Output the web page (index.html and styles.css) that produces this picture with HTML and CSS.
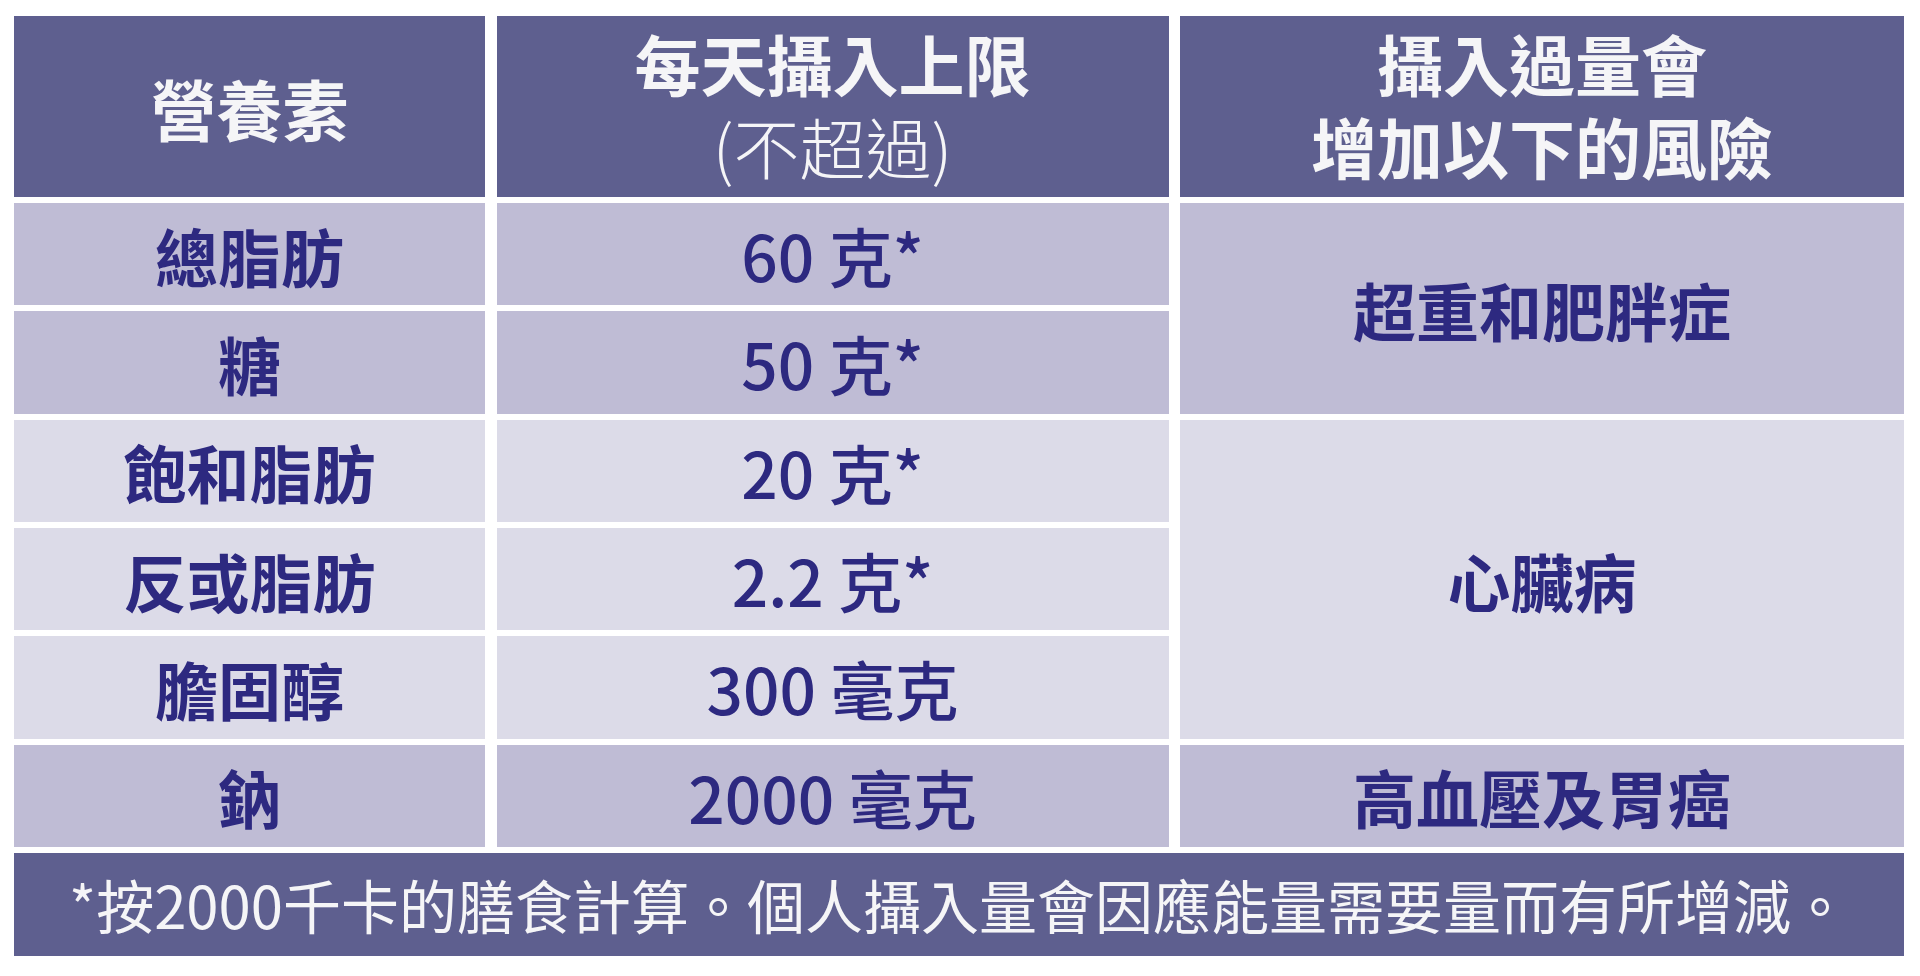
FILE: index.html
```html
<!DOCTYPE html>
<html lang="zh-Hant">
<head>
<meta charset="utf-8">
<title>營養素攝入上限</title>
<link rel="stylesheet" href="styles.css">
</head>
<body>
<main class="page">
  <div class="table">
    <div class="cell head c1 r1">營養素</div>
    <div class="cell head c2 r1"><p class="head-lines">每天攝入上限<br><span class="light">(不超過)</span></p></div>
    <div class="cell head c3 r1"><p class="head-lines">攝入過量會<br>增加以下的風險</p></div>

    <div class="cell dark label c1 r2">總脂肪</div>
    <div class="cell dark value c2 r2">60 克*</div>
    <div class="cell dark label c3 r2 span2">超重和肥胖症</div>

    <div class="cell dark label c1 r3">糖</div>
    <div class="cell dark value c2 r3">50 克*</div>

    <div class="cell pale label c1 r4">飽和脂肪</div>
    <div class="cell pale value c2 r4">20 克*</div>
    <div class="cell pale label c3 r4 span3">心臟病</div>

    <div class="cell pale label c1 r5">反或脂肪</div>
    <div class="cell pale value c2 r5">2.2 克*</div>

    <div class="cell pale label c1 r6">膽固醇</div>
    <div class="cell pale value c2 r6">300 毫克</div>

    <div class="cell dark label c1 r7">鈉</div>
    <div class="cell dark value c2 r7">2000 毫克</div>
    <div class="cell dark label c3 r7">高血壓及胃癌</div>

    <div class="cell head foot r8">*按2000千卡的膳食計算。個人攝入量會因應能量需要量而有所增減。</div>
  </div>
</main>
</body>
</html>
```

FILE: styles.css
```css
html, body {
  margin: 0;
  padding: 0;
  background: #ffffff;
}

.page {
  padding: 16px 16px 0 14px;
  font-family: "Noto Sans CJK TC", "Noto Sans", sans-serif;
}

.table {
  display: grid;
  grid-template-columns: 471px 672px 724px;
  grid-template-rows: 181px repeat(6, 102.33px) 103px;
  column-gap: 11.5px;
  row-gap: 6px;
}

.cell {
  display: flex;
  align-items: center;
  justify-content: center;
  text-align: center;
  box-sizing: border-box;
}

.head {
  background: #5e5f8f;
  color: #f5f5f7;
  font-size: 66px;
  font-weight: 700;
  line-height: 1;
}

.head-lines {
  margin: 0;
  line-height: 83px;
  padding-bottom: 6px;
}

.head-lines .light {
  font-weight: 300;
}

.dark {
  background: #bfbcd5;
}

.pale {
  background: #dcdbe8;
}

.label {
  color: #2d2980;
  font-size: 63px;
  font-weight: 700;
}

.value {
  color: #2d2980;
  font-size: 64px;
  font-weight: 500;
}

.c1 { grid-column: 1; }
.c2 { grid-column: 2; }
.c3 { grid-column: 3; }

.r1 { grid-row: 1; }
.r2 { grid-row: 2; }
.r3 { grid-row: 3; }
.r4 { grid-row: 4; }
.r5 { grid-row: 5; }
.r6 { grid-row: 6; }
.r7 { grid-row: 7; }
.r8 { grid-row: 8; }

.span2 { grid-row-end: span 2; }
.span3 { grid-row-end: span 3; }

.foot {
  grid-column: 1 / -1;
  font-size: 58px;
  font-weight: 400;
}
```
